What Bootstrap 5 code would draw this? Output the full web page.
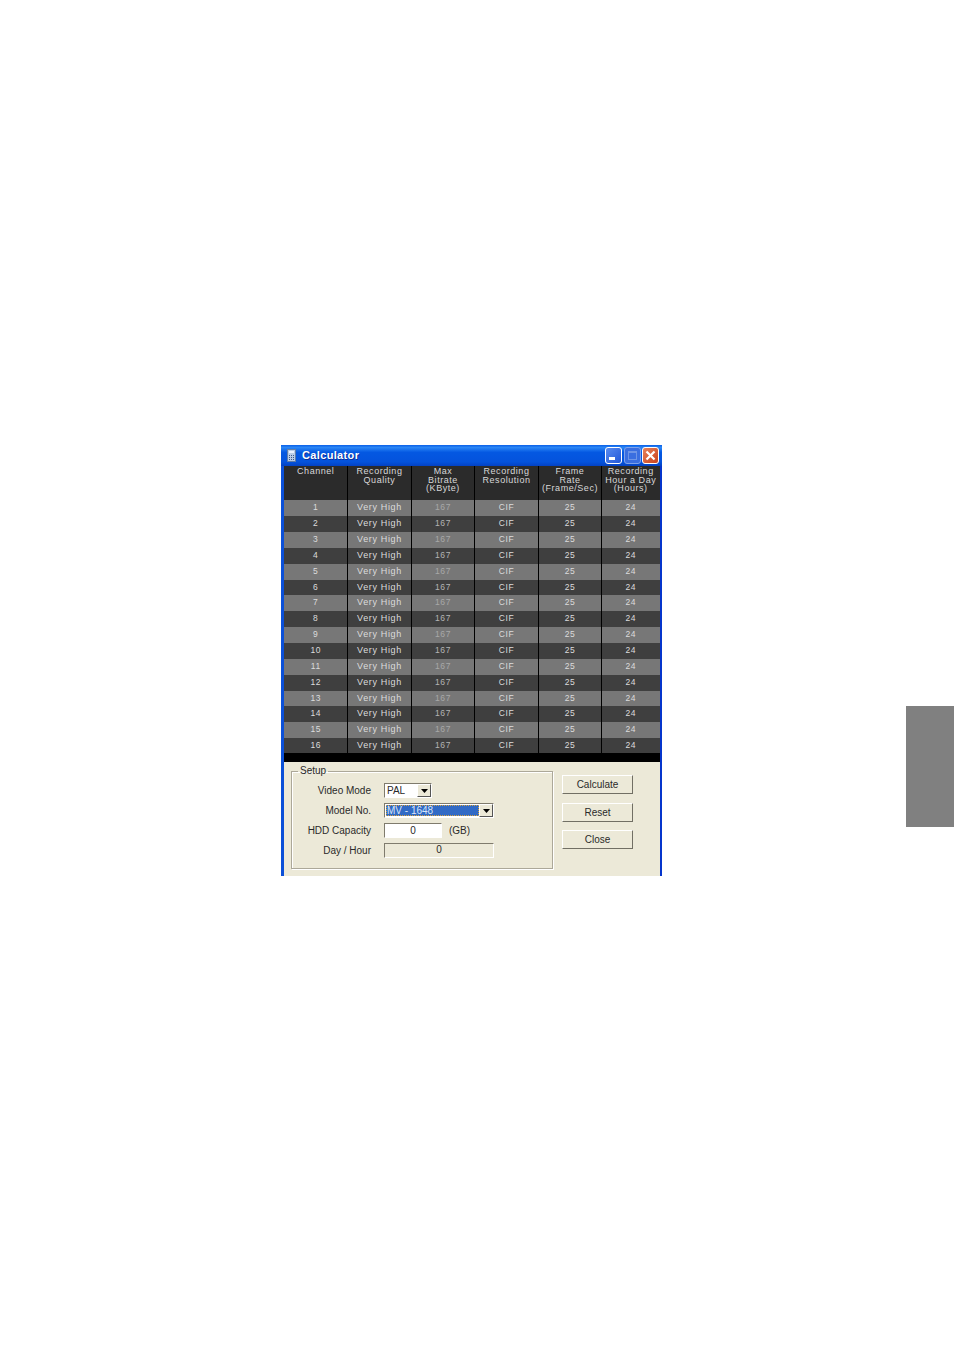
<!DOCTYPE html>
<html lang="en">
<head>
<meta charset="utf-8">
<title>Calculator</title>
<link href="https://cdn.jsdelivr.net/npm/bootstrap@5.3.0/dist/css/bootstrap.min.css" rel="stylesheet">
<style>
html,body{background:#fff;margin:0;height:1348px;overflow:hidden}
body{font-family:"Liberation Sans",Arial,sans-serif;font-size:9px;letter-spacing:.55px}
.page-wrap{width:954px;height:1348px}
.calc-win{width:381px;height:431px;margin:445px 0 0 281px;background:#ece9d8;border-left:3px solid #0b50d8;border-right:2px solid #0535cc;flex:none;display:flex;flex-direction:column}
.calc-title{height:21px;margin-left:-3px;margin-right:-2px;padding:0 3px 0 6px;background:linear-gradient(180deg,#0a5fe8 0,#2a86f5 12%,#0458e2 35%,#0453dc 80%,#0342c4 100%);gap:6px}
.calc-name{color:#fff;font-weight:700;font-size:11px;letter-spacing:.35px;line-height:1;flex:1 1 auto;text-shadow:1px 1px 0 #0f2f9a}
.calc-btn{display:block;flex:none}
.calc-btns{gap:1.5px}
.grid-wrap{height:296px;background:#000;flex:none}
.table.calc-table{--bs-table-bg:transparent;--bs-table-color:#e0e0e0;--bs-table-border-color:#000;width:376px;table-layout:fixed;margin:0;border-collapse:collapse;background:#000}
.calc-table th,.calc-table td{padding:0 0 0 1px;border:0;border-right:1px solid #000;text-align:center;box-shadow:none;font-weight:400;line-height:8.6px;overflow:hidden;white-space:nowrap;background:transparent;color:#dcdcdc}
.calc-table th:last-child,.calc-table td:last-child{border-right:0;padding-left:0}
.calc-table thead tr{height:34px;background:#2b2b2b}
.calc-table th{vertical-align:top;padding-top:1px;color:#d8d8d8}
.calc-table .col-first{width:63px}
.calc-table .col-wide{width:64px}
.calc-table .col-narrow{width:63px}
.calc-table .col-last{width:59px}
.calc-table tbody tr{height:16px}
.calc-table tbody tr.short-row{height:15px}
.calc-table tbody tr:nth-child(odd){background:#777}
.calc-table tbody tr:nth-child(even){background:#3f3f3f}
.calc-table td{vertical-align:middle;font-size:8.5px;padding-bottom:2px}
.calc-table tr.short-row td{padding-bottom:1px}
.calc-table td.cell-dim{color:#a8a8a8}
.calc-table tbody tr:nth-child(even) td.cell-dim{color:#b4b4b4}
.calc-table td.cell-q{font-size:9px;letter-spacing:.65px}
.calc-lower{flex:1 1 auto;padding:3px 27px 0 7px;color:#2a2a2a;font-size:10px;letter-spacing:0;gap:9px}
.setup-box{width:262px;height:104px;margin:0;padding:0;border:1px solid #aca899;box-shadow:1px 1px 0 #fff,inset 1px 1px 0 #fff;flex:none}
.setup-title{float:none;width:auto;margin:0 0 0 6px;padding:0 2px;font-size:10px;line-height:12px;letter-spacing:0;color:#2a2a2a}
.setup-form{margin-top:6px;gap:5px}
.setup-row{height:15px;gap:13px}
.setup-label{width:79px;text-align:right;flex:none;line-height:15px}
.combo-box{height:15px;background:#fff;border:1px solid #7f7b6d;border-right-color:#fff;border-bottom-color:#fff;padding:0 0 0 2px;color:#2a2a2a;line-height:13px;font-size:10px}
.combo-mode{width:48px}
.combo-model{width:110px;padding:0 0 0 1px}
.combo-text{flex:1 1 auto}
.combo-sel{background:#316ac5;color:#d8e4f8;outline:1px dotted #d9a441;outline-offset:-1px;line-height:11px;padding-left:1px;flex:1 1 auto;height:11px}
.combo-arrow{width:14px;height:13px;background:#ece9d8;border:1px solid #fff;border-right-color:#555;border-bottom-color:#555;flex:none}
.hdd-input.form-control{width:58px;height:15px;min-height:0;padding:0;border-radius:0;border:1px solid #7f7b6d;border-right-color:#fff;border-bottom-color:#fff;text-align:center;font-size:10px;line-height:13px;color:#2a2a2a;letter-spacing:0;box-shadow:none;flex:none}
.hdd-unit{margin-left:-6px;line-height:15px}
.day-out{width:110px;height:15px;border:1px solid #7f7b6d;border-right-color:#fff;border-bottom-color:#fff;text-align:center;line-height:12px}
.btn.calc-action{--bs-btn-padding-x:0;--bs-btn-padding-y:0;--bs-btn-font-size:10px;--bs-btn-border-radius:0;--bs-btn-color:#2a2a2a;--bs-btn-bg:#ece9d8;--bs-btn-hover-bg:#ece9d8;--bs-btn-hover-color:#2a2a2a;width:71px;height:19px;line-height:15px;letter-spacing:0;border:1px solid #fff;border-right-color:#716f64;border-bottom-color:#716f64;display:block}
.action-col{gap:8.5px;margin-top:10px}
.side-tab{width:48px;height:121px;margin:706px 0 0 244px;background:#808080;flex:none}
</style>
</head>
<body>
<div class="page-wrap d-flex align-items-start">
  <section class="calc-win">
    <header class="calc-title d-flex align-items-center">
      <svg width="9" height="13" viewBox="0 0 9 13"><rect x=".5" y=".5" width="8" height="12" fill="#b9cbe6" stroke="#5f7da8"/><rect x="2" y="2" width="5" height="2" fill="#eaf2ff"/><path d="M2 6h1v1H2zM4 6h1v1H4zM6 6h1v1H6zM2 8h1v1H2zM4 8h1v1H4zM6 8h1v1H6zM2 10h1v1H2zM4 10h1v1H4zM6 10h1v1H6z" fill="#3c5a8a"/></svg>
      <span class="calc-name">Calculator</span>
      <div class="calc-btns d-flex">
        <svg class="calc-btn" width="17" height="17" viewBox="0 0 17 17"><defs><linearGradient id="gMin" x1="0" y1="0" x2="1" y2="1"><stop offset="0" stop-color="#5b8df0"/><stop offset="1" stop-color="#1f55d8"/></linearGradient></defs><rect x=".5" y=".5" width="16" height="16" rx="2.5" fill="url(#gMin)" stroke="#fff"/><rect x="4" y="10" width="6" height="3" fill="#fff"/></svg>
        <svg class="calc-btn" width="17" height="17" viewBox="0 0 17 17"><rect x=".5" y=".5" width="16" height="16" rx="2.5" fill="#3a6ee0" stroke="#7fa2ea"/><rect x="4.5" y="4.5" width="8" height="8" fill="none" stroke="#6d94e6"/><rect x="4" y="4" width="9" height="2" fill="#6d94e6"/></svg>
        <svg class="calc-btn" width="17" height="17" viewBox="0 0 17 17"><defs><linearGradient id="gCls" x1="0" y1="0" x2="1" y2="1"><stop offset="0" stop-color="#e8845c"/><stop offset="1" stop-color="#c9411c"/></linearGradient></defs><rect x=".5" y=".5" width="16" height="16" rx="2.5" fill="url(#gCls)" stroke="#fff"/><path d="M4.5 4.5l8 8M12.5 4.5l-8 8" stroke="#fff" stroke-width="2.2"/></svg>
      </div>
    </header>
    <div class="grid-wrap">
      <table class="table calc-table">
        <colgroup><col class="col-first"><col class="col-wide"><col class="col-narrow"><col class="col-wide"><col class="col-narrow"><col class="col-last"></colgroup>
        <thead>
          <tr><th>Channel</th><th>Recording<br>Quality</th><th>Max<br>Bitrate<br>(KByte)</th><th>Recording<br>Resolution</th><th>Frame<br>Rate<br>(Frame/Sec)</th><th>Recording<br>Hour a Day<br>(Hours)</th></tr>
        </thead>
        <tbody>
          <tr><td>1</td><td class="cell-q">Very High</td><td class="cell-dim">167</td><td>CIF</td><td>25</td><td>24</td></tr>
          <tr><td>2</td><td class="cell-q">Very High</td><td class="cell-dim">167</td><td>CIF</td><td>25</td><td>24</td></tr>
          <tr><td>3</td><td class="cell-q">Very High</td><td class="cell-dim">167</td><td>CIF</td><td>25</td><td>24</td></tr>
          <tr><td>4</td><td class="cell-q">Very High</td><td class="cell-dim">167</td><td>CIF</td><td>25</td><td>24</td></tr>
          <tr><td>5</td><td class="cell-q">Very High</td><td class="cell-dim">167</td><td>CIF</td><td>25</td><td>24</td></tr>
          <tr class="short-row"><td>6</td><td class="cell-q">Very High</td><td class="cell-dim">167</td><td>CIF</td><td>25</td><td>24</td></tr>
          <tr><td>7</td><td class="cell-q">Very High</td><td class="cell-dim">167</td><td>CIF</td><td>25</td><td>24</td></tr>
          <tr><td>8</td><td class="cell-q">Very High</td><td class="cell-dim">167</td><td>CIF</td><td>25</td><td>24</td></tr>
          <tr><td>9</td><td class="cell-q">Very High</td><td class="cell-dim">167</td><td>CIF</td><td>25</td><td>24</td></tr>
          <tr><td>10</td><td class="cell-q">Very High</td><td class="cell-dim">167</td><td>CIF</td><td>25</td><td>24</td></tr>
          <tr><td>11</td><td class="cell-q">Very High</td><td class="cell-dim">167</td><td>CIF</td><td>25</td><td>24</td></tr>
          <tr><td>12</td><td class="cell-q">Very High</td><td class="cell-dim">167</td><td>CIF</td><td>25</td><td>24</td></tr>
          <tr class="short-row"><td>13</td><td class="cell-q">Very High</td><td class="cell-dim">167</td><td>CIF</td><td>25</td><td>24</td></tr>
          <tr><td>14</td><td class="cell-q">Very High</td><td class="cell-dim">167</td><td>CIF</td><td>25</td><td>24</td></tr>
          <tr><td>15</td><td class="cell-q">Very High</td><td class="cell-dim">167</td><td>CIF</td><td>25</td><td>24</td></tr>
          <tr class="short-row"><td>16</td><td class="cell-q">Very High</td><td class="cell-dim">167</td><td>CIF</td><td>25</td><td>24</td></tr>
        </tbody>
      </table>
    </div>
    <div class="calc-lower d-flex align-items-start">
      <fieldset class="setup-box">
        <legend class="setup-title">Setup</legend>
        <div class="setup-form d-flex flex-column">
          <div class="setup-row d-flex">
            <span class="setup-label">Video Mode</span>
            <div class="combo-box combo-mode d-flex"><span class="combo-text">PAL</span><span class="combo-arrow d-flex align-items-center justify-content-center"><svg width="7" height="4" viewBox="0 0 7 4"><path d="M0 0h7L3.5 4z" fill="#000"/></svg></span></div>
          </div>
          <div class="setup-row d-flex">
            <span class="setup-label">Model No.</span>
            <div class="combo-box combo-model d-flex align-items-center"><span class="combo-sel">MV - 1648</span><span class="combo-arrow d-flex align-items-center justify-content-center"><svg width="7" height="4" viewBox="0 0 7 4"><path d="M0 0h7L3.5 4z" fill="#000"/></svg></span></div>
          </div>
          <div class="setup-row d-flex">
            <span class="setup-label">HDD Capacity</span>
            <input class="form-control hdd-input" value="0" aria-label="HDD Capacity">
            <span class="hdd-unit">(GB)</span>
          </div>
          <div class="setup-row d-flex">
            <span class="setup-label">Day / Hour</span>
            <div class="day-out">0</div>
          </div>
        </div>
      </fieldset>
      <div class="action-col d-flex flex-column">
        <button type="button" class="btn calc-action">Calculate</button>
        <button type="button" class="btn calc-action">Reset</button>
        <button type="button" class="btn calc-action">Close</button>
      </div>
    </div>
  </section>
  <div class="side-tab"></div>
</div>
<script src="https://cdn.jsdelivr.net/npm/bootstrap@5.3.0/dist/js/bootstrap.bundle.min.js"></script>
</body>
</html>
